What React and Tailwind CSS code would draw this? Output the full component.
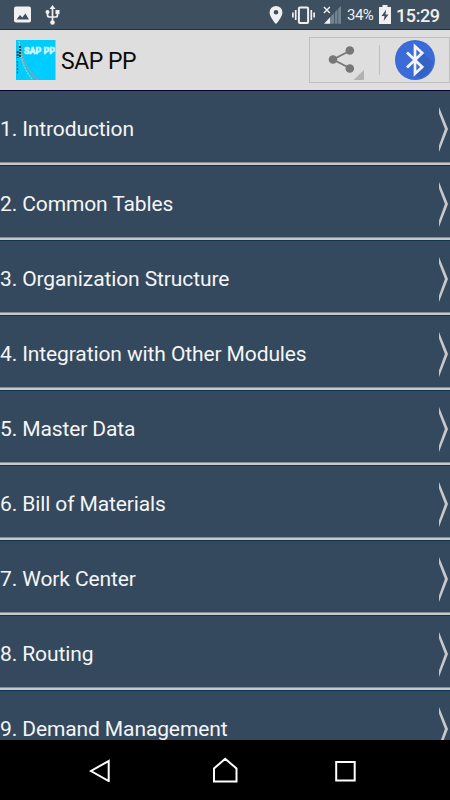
const topics = [
  'Introduction',
  'Common Tables',
  'Organization Structure',
  'Integration with Other Modules',
  'Master Data',
  'Bill of Materials',
  'Work Center',
  'Routing',
  'Demand Management',
];

function StatusBar() {
  return (
    <header className="flex h-[30px] shrink-0 items-center border-b border-[#12384a] bg-[#3e4f5f] text-[#f0f0f0]">
      <svg className="ml-3.5 h-[17px] w-[17px]" viewBox="0 0 17 17">
        <rect x="0" y="0.5" width="17" height="16" rx="2" fill="#f0f0f0" />
        <path d="M2.5 13.5 6 9l2.3 2.6L11.4 7.5l3.6 6z" fill="#3e4f5f" />
      </svg>
      <svg className="ml-3.5 h-5 w-4" viewBox="0 0 16 20" fill="none" stroke="#f0f0f0" strokeWidth="1.7">
        <path d="M7.5 3v14M2.5 7v3q0 2 2 2h6q2 0 2-2V7" />
        <path d="M7.5 0 10.5 4h-6zM10.5 5h4v4h-4z" fill="#f0f0f0" stroke="none" />
        <circle cx="2.5" cy="7" r="2" fill="#f0f0f0" stroke="none" />
        <circle cx="7.5" cy="17.5" r="2.3" fill="#f0f0f0" stroke="none" />
      </svg>
      <svg className="ml-auto h-[18px] w-[14px]" viewBox="0 0 14 18">
        <path fill="#f0f0f0" fillRule="evenodd" d="M7 0a6.4 6.4 0 0 0-6.4 6.4C.6 11.2 7 18 7 18s6.4-6.8 6.4-11.6A6.4 6.4 0 0 0 7 0m0 4a2.3 2.3 0 1 1 0 4.6A2.3 2.3 0 0 1 7 4" />
      </svg>
      <svg className="ml-[9px] h-[18px] w-[23px]" viewBox="0 0 23 18" fill="none" stroke="#f0f0f0">
        <rect x="6.9" y="1.5" width="9.2" height="15.5" rx="1" strokeWidth="2" />
        <path d="M.9 6.5v5M3.7 4v10M19.3 4v10M22.1 6.5v5" strokeWidth="1.7" />
      </svg>
      <svg className="ml-2 h-[18px] w-[18px]" viewBox="0 0 18 18">
        <path d="M1 17.7 7.3 11v6.7z" fill="#f0f0f0" />
        <path d="M8 10 11.2 7v10.7H8zM12 6l2.5-2.5v14.2H12zM15.2 2.8 18 0v17.7h-2.8z" fill="#748390" />
        <path d="M.9.9 6.9 7.1M6.9.9.9 7.1" stroke="#f0f0f0" strokeWidth="1.4" />
      </svg>
      <span className="ml-[6px] w-[27px] whitespace-nowrap pt-px text-[15px] leading-none tracking-[-0.5px]">34%</span>
      <svg className="ml-[5px] h-[19px] w-[12px]" viewBox="0 0 12 19">
        <path d="M3.5 0h5v2H12v17H0V2h3.5z" fill="#f0f0f0" />
        <path d="M7.2 4.5 2.5 11h3l-.8 5L9.5 9.5h-3z" fill="#3e4f5f" />
      </svg>
      <span className="ml-[5px] mr-[11px] w-[43px] whitespace-nowrap pt-0.5 text-[18px] font-medium leading-none tracking-[-0.4px]">15:29</span>
    </header>
  );
}

function AppLogo() {
  return (
    <svg className="ml-4 h-10 w-10" viewBox="0 0 40 40">
      <rect width="39.5" height="40" fill="#00cdff" />
      <text x="8" y="14" fontSize="9.5" fontWeight="700" fill="#d5f8ff" stroke="#d5f8ff" strokeWidth=".6" textLength="31" lengthAdjust="spacingAndGlyphs">SAP PP</text>
      <path d="M3 1C5 16 11 31 22 40" fill="none" stroke="#a296b5" strokeWidth="1.2" />
      <path d="M3 1C4 16 8 31 17 40" fill="none" stroke="#a5d5a0" strokeWidth="1.2" strokeDasharray="2 1" />
      <path d="M1.7 11v7M4 6v11" stroke="#14414e" strokeWidth="2" strokeDasharray="2 1" />
      <path d="M1.5 21v14" stroke="#176c82" strokeWidth="1.4" strokeDasharray="2 1.5" />
    </svg>
  );
}

function ActionBar() {
  return (
    <div className="flex h-[60px] shrink-0 items-center bg-[#dedede]">
      <AppLogo />
      <h1 className="ml-[5px] mt-[3px] text-[23px] leading-none tracking-[-0.5px] text-[#0b0b0b]">SAP PP</h1>
      <div className="ml-auto flex h-[46px] w-[141px] items-center border border-[#bfbfbf]">
        <svg className="h-11 w-[69px]" viewBox="0 0 69 44">
          <path d="M40.5 12.5 23 21.5 40.5 30.5" fill="none" stroke="#777" strokeWidth="1.8" />
          <circle cx="39.8" cy="12.5" r="4.3" fill="#777" />
          <circle cx="23" cy="21.5" r="4.3" fill="#777" />
          <circle cx="39.8" cy="30.5" r="4.3" fill="#777" />
          <path d="M54 32v10H43.5z" fill="#b2b2b2" />
        </svg>
        <div className="h-[30px] w-px bg-[#bfbfbf]" />
        <svg className="ml-[15px] h-10 w-10" viewBox="0 0 40 40">
          <circle cx="20" cy="20" r="20" fill="#3b6bd8" />
          <path d="M20 35 28 27l-5-7 5-7 10 9a20 20 0 0 1-13 17z" fill="#3562c5" />
          <path d="M12 12.5 27.2 27 20 33.7V6.3L27.2 13 12 27.5" fill="none" stroke="#f4f4f4" strokeWidth="2.7" />
        </svg>
      </div>
    </div>
  );
}

function TopicRow({ label }) {
  return (
    <li className="h-[75px] shrink-0 border-t border-[#0e3450] first:border-[#04042e]">
      <div className="flex h-[74px] items-center justify-between border-b-2 border-[#c8c8c6] bg-[#34495e]">
        <div className="flex h-full w-full items-center justify-between border-b border-[#848f98]">
          <span className="mt-[5px] whitespace-nowrap text-[21px] leading-6 tracking-[-0.11px] text-[#f5f5f5]">{label}</span>
          <svg className="mr-0.5 mt-[5px] h-[45px] w-[9px]" viewBox="0 0 9 45">
            <path d="M0 0 9 22 0 45V38.5L5.9 22 0 6.5z" fill="#c6c9cb" />
          </svg>
        </div>
      </div>
    </li>
  );
}

function NavigationBar() {
  return (
    <nav className="flex h-[60px] shrink-0 items-center justify-center bg-black pr-1">
      <svg className="mr-[101px] h-6 w-6" viewBox="0 0 24 24" fill="none" stroke="white" strokeWidth="2">
        <path d="M21.7 3v20L4 13z" />
      </svg>
      <svg className="h-[26px] w-[26px]" viewBox="0 0 26 26" fill="none" stroke="white" strokeWidth="2">
        <path d="M2 24.5V11.5L13.2 1.8 24.5 11.5v13z" />
      </svg>
      <svg className="ml-[97px] h-6 w-6" viewBox="0 0 24 24" fill="none" stroke="white" strokeWidth="2">
        <path d="M1.2 4h18.5v18.5H1.2z" />
      </svg>
    </nav>
  );
}

export default function App() {
  return (
    <main className="flex h-[800px] w-[450px] flex-col overflow-hidden bg-[#34495e] font-[Roboto,sans-serif]">
      <StatusBar />
      <ActionBar />
      <ol className="flex min-h-0 flex-1 flex-col overflow-hidden">
        {topics.map((topic, index) => (
          <TopicRow key={topic} label={`${index + 1}. ${topic}`} />
        ))}
      </ol>
      <NavigationBar />
    </main>
  );
}
